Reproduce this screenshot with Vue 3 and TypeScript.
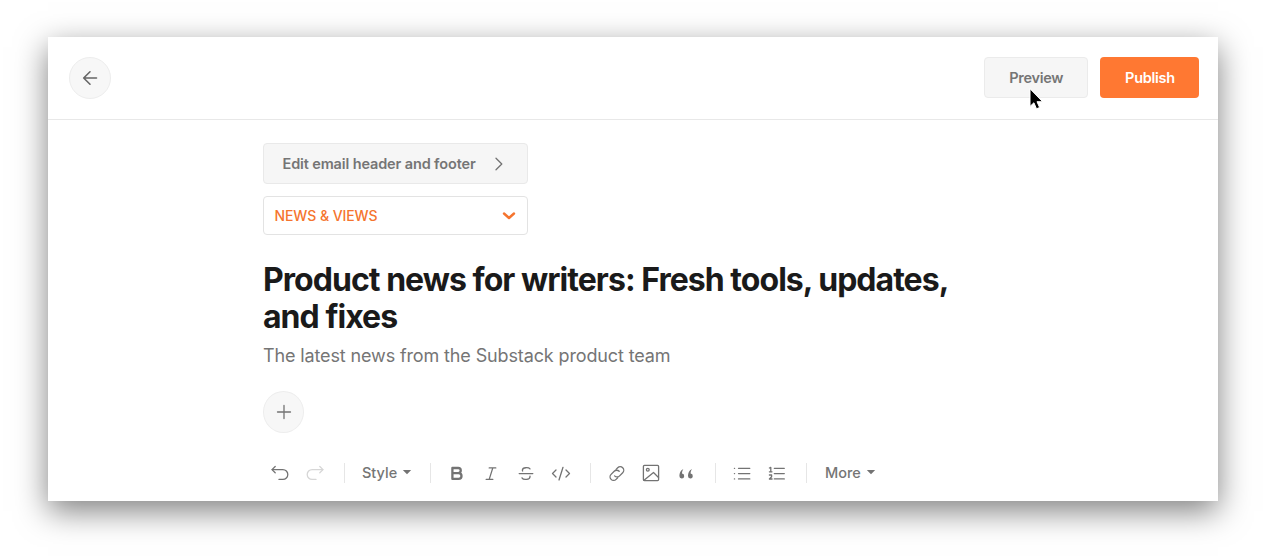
<template>
  <main class="page">
    <div class="editor">
      <header class="topbar">
        <button class="round-button" aria-label="Back">
          <svg width="20" height="20" viewBox="0 0 20 20">
            <path d="M16.5 10H3.7M10 3.8L3.7 10l6.3 6.2" />
          </svg>
        </button>
        <div class="actions">
          <button class="button preview">
            <span>Preview</span>
            <svg class="cursor" width="16" height="23" viewBox="0 0 16 23">
              <path d="M2 1v17.4l3.9-3.6 2.6 6 3.1-1.3-2.6-5.8h5.3z" />
            </svg>
          </button>
          <button class="button publish">Publish</button>
        </div>
      </header>

      <section class="content">
        <button class="header-link">
          <span>Edit email header and footer</span>
          <svg width="10" height="14" viewBox="0 0 10 14"><path d="M2 1.3l5.8 5.7L2 12.7" /></svg>
        </button>
        <button class="section-select">
          <span>{{ sectionName }}</span>
          <svg width="14" height="9" viewBox="0 0 14 9"><path d="M2 2.5L7 7l5-4.5" /></svg>
        </button>

        <h1>Product news for writers: Fresh tools, updates,<br />and fixes</h1>
        <p class="subtitle">The latest news from the Substack product team</p>

        <button class="round-button add" aria-label="Add">
          <svg width="20" height="20" viewBox="0 0 20 20"><path d="M10 3.5v13M3.5 10h13" /></svg>
        </button>

        <div class="toolbar">
          <template v-for="(group, index) in groups" :key="index">
            <span v-if="index > 0" class="divider"></span>
            <button v-if="group.label" class="menu" :class="group.label.toLowerCase()">
              <span>{{ group.label }}</span>
              <svg width="10" height="6" viewBox="0 0 10 6"><path d="M.8.9h8.4L5 5.3z" /></svg>
            </button>
            <div v-else class="tools">
              <button v-for="tool in group.tools" :key="tool.name" class="tool" :class="tool.name" :aria-label="tool.name">
                <svg width="20" height="20" viewBox="0 0 20 20">
                  <path v-for="(d, i) in tool.paths" :key="i" :d="d" />
                </svg>
              </button>
            </div>
          </template>
        </div>
      </section>
    </div>
  </main>
</template>

<script setup lang="ts">
import { ref } from 'vue'

interface Tool {
  name: string
  paths: string[]
}

interface ToolGroup {
  label?: string
  tools?: Tool[]
}

const sectionName = ref('NEWS & VIEWS')

const groups: ToolGroup[] = [
  {
    tools: [
      { name: 'undo', paths: ['M5.2 3.5L2 6.6l3.2 3.1', 'M2.2 6.6h10.7a4.9 4.9 0 0 1 0 9.8H9'] },
      { name: 'redo', paths: ['M14.8 3.5L18 6.6l-3.2 3.1', 'M17.8 6.6H7.1a4.9 4.9 0 0 0 0 9.8H11'] }
    ]
  },
  { label: 'Style' },
  {
    tools: [
      { name: 'bold', paths: ['M5.4 5h5.8a2.5 2.5 0 0 1 0 5.1H5.4zM5.4 10.1h6.2a2.9 2.9 0 0 1 0 5.8H5.4z'] },
      { name: 'italic', paths: ['M8.2 4.9h6.6M5.2 16.4h6.6M11.8 4.9l-3.6 11.5'] },
      { name: 'strike', paths: ['M3.2 10.6h13.6', 'M14 5.9c-1.2-1.6-7.4-1.9-7.6 1.2 0 .3 0 .6.2.9', 'M6 14.9c1.2 2.2 8 2.1 8-1.2v-.6'] },
      { name: 'code', paths: ['M5 7l-3.5 3.5L5 14', 'M15 7l3.5 3.5L15 14', 'M12 4.3L8 17'] }
    ]
  },
  {
    tools: [
      { name: 'link', paths: ['M7.6 12.9a3.5 3.5 0 0 0 5 0l3.1-3.1a3.5 3.5 0 0 0-5-5L9.1 6.4', 'M12.2 8.3a3.5 3.5 0 0 0-5 0l-3.1 3.1a3.5 3.5 0 0 0 5 5l1.6-1.6'] },
      { name: 'image', paths: ['M3.4 2.4h13.2a1 1 0 0 1 1 1v13.2a1 1 0 0 1-1 1H3.4a1 1 0 0 1-1-1V3.4a1 1 0 0 1 1-1z', 'M3 17.2l9.5-7.7 5 5', 'M8.2 6.8a1.4 1.4 0 1 1-2.8 0 1.4 1.4 0 0 1 2.8 0z'] },
      { name: 'quote', paths: ['M7.4 6c-3.1 1.4-4 4.3-4 6.9a2.4 2.4 0 1 0 2.6-2.3c0-1.9.6-3.4 1.4-4.6z', 'M16 6c-3.1 1.4-4 4.3-4 6.9a2.4 2.4 0 1 0 2.6-2.3c0-1.9.6-3.4 1.4-4.6z'] }
    ]
  },
  {
    tools: [
      { name: 'bullets', paths: ['M6.5 5.3h11.3M6.5 10.6h11.3M6.5 15.9h11.3', 'M2.4 5.3h.2M2.4 10.6h.2M2.4 15.9h.2'] },
      { name: 'numbers', paths: ['M7.3 5.3h10M7.3 10.6h10M7.3 15.9h10', 'M2.4 5l1.4-.6v4.4M2.4 8.8h2.6', 'M2.4 12h2.2v1.7L2.4 16h2.7'] }
    ]
  },
  { label: 'More' }
]
</script>

<style>
body {
  background: #fff;
}
</style>

<style scoped>
.page {
  height: 556px;
  padding: 37px 64px 55px 48px;
  box-sizing: border-box;
  overflow: hidden;
  font-family: Inter, 'Liberation Sans', sans-serif;
  color: #757575;
}

.editor {
  height: 464px;
  background: #fff;
  box-shadow: 0 10px 30px rgba(0, 0, 0, 0.5);
}

button {
  padding: 0;
  border: 0;
  background: none;
  font: inherit;
  color: inherit;
  box-sizing: border-box;
}

svg {
  flex: none;
  fill: none;
  stroke: #737373;
  stroke-width: 1.3;
  stroke-linecap: round;
  stroke-linejoin: round;
}

.topbar {
  display: flex;
  align-items: center;
  justify-content: space-between;
  height: 83px;
  padding: 0 18.6px 0 20.6px;
  border-bottom: 1px solid #e8e8e8;
  box-sizing: border-box;
}

.round-button {
  display: flex;
  align-items: center;
  justify-content: center;
  width: 42px;
  height: 42px;
  border: 1px solid #ededed;
  border-radius: 50%;
  background: #f7f7f7;
}

.topbar .round-button svg {
  stroke: #666;
  stroke-width: 1.6;
}

.actions {
  display: flex;
  gap: 12px;
}

.button {
  height: 41px;
  margin-bottom: 1px;
  border-radius: 4px;
  font-size: 14.5px;
  font-weight: 600;
  letter-spacing: -0.3px;
}

.preview {
  position: relative;
  width: 104.4px;
  border: 1px solid #ebebeb;
  background: #f6f6f6;
}

.cursor {
  position: absolute;
  left: 43px;
  top: 30px;
  fill: #000;
  stroke: #fff;
  stroke-width: 1;
}

.publish {
  width: 99px;
  background: #ff7832;
  color: #fff;
}

.content {
  width: 740px;
  margin-left: 215px;
  padding-top: 23px;
}

.header-link,
.section-select {
  display: flex;
  align-items: center;
  justify-content: space-between;
  width: 265px;
  border-radius: 4px;
}

.header-link {
  height: 41px;
  padding: 0 23px 0 18.5px;
  border: 1px solid #e9e9e9;
  background: #f6f6f6;
  font-size: 14.5px;
  font-weight: 600;
  letter-spacing: -0.13px;
}

.section-select {
  height: 39px;
  margin-top: 12px;
  padding: 0 11px 0 10.5px;
  border: 1px solid #e3e3e3;
  color: #f5742e;
  font-size: 14px;
  font-weight: 500;
  letter-spacing: -0.08px;
}

.section-select svg {
  stroke: #f5742e;
  stroke-width: 2.4;
}

h1 {
  margin: 26px 0 0;
  color: #1a1a1a;
  font-size: 32px;
  font-weight: 700;
  line-height: 37px;
  letter-spacing: -0.96px;
  white-space: nowrap;
}

.subtitle {
  margin: 9px 0 0;
  font-size: 18px;
  line-height: 24px;
  letter-spacing: -0.13px;
  white-space: nowrap;
}

.add {
  width: 41px;
  margin-top: 23px;
}

.toolbar {
  display: flex;
  align-items: center;
  height: 24px;
  margin-top: 28px;
}

.tools {
  display: flex;
  gap: 14.7px;
  padding: 0 19.4px 0 15.5px;
}

.tools:first-child {
  padding: 0 19.3px 0 7px;
}

.tool {
  display: flex;
  width: 20px;
  height: 20px;
}

.divider {
  width: 1px;
  height: 20px;
  background: #e6e6e6;
}

.menu {
  display: flex;
  align-items: center;
  gap: 5px;
  padding: 0 18px 2px 17px;
  font-size: 14.5px;
  font-weight: 500;
}

.menu.more {
  padding-left: 18px;
}

.menu svg {
  fill: #737373;
  stroke: none;
}

.redo svg {
  stroke: #d6d6d6;
}

.bold svg {
  stroke-width: 2.3;
}

.quote svg {
  fill: #737373;
  stroke: none;
}
</style>
